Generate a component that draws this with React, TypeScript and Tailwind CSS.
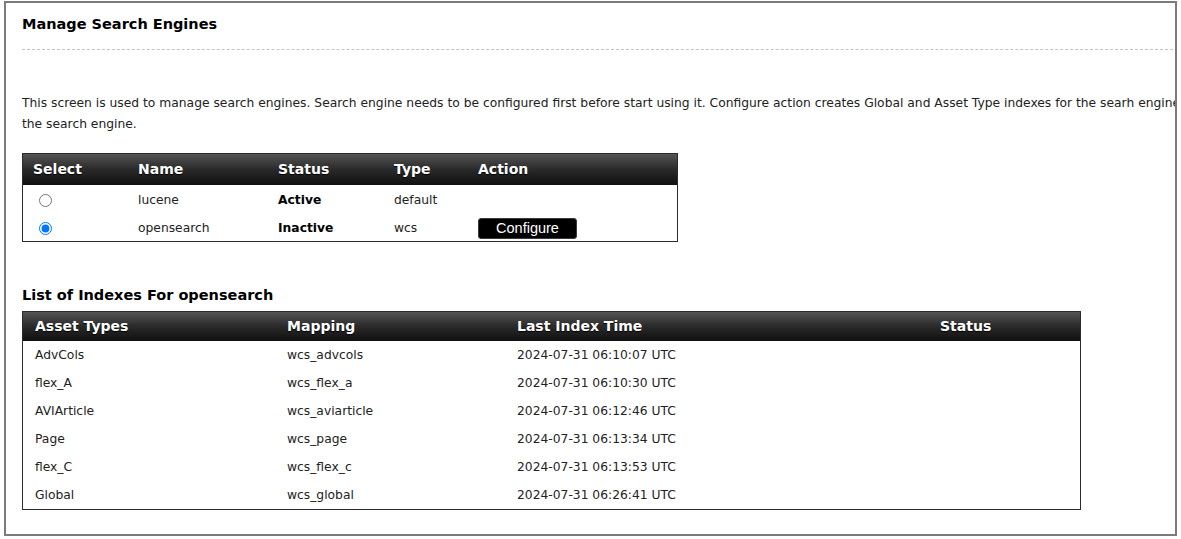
const engines = [
  { name: 'lucene', status: 'Active', type: 'default', selected: false },
  { name: 'opensearch', status: 'Inactive', type: 'wcs', selected: true },
];

const indexes = [
  { asset: 'AdvCols', mapping: 'wcs_advcols', time: '2024-07-31 06:10:07 UTC' },
  { asset: 'flex_A', mapping: 'wcs_flex_a', time: '2024-07-31 06:10:30 UTC' },
  { asset: 'AVIArticle', mapping: 'wcs_aviarticle', time: '2024-07-31 06:12:46 UTC' },
  { asset: 'Page', mapping: 'wcs_page', time: '2024-07-31 06:13:34 UTC' },
  { asset: 'flex_C', mapping: 'wcs_flex_c', time: '2024-07-31 06:13:53 UTC' },
  { asset: 'Global', mapping: 'wcs_global', time: '2024-07-31 06:26:41 UTC' },
];

const headRow = 'bg-linear-to-b from-[#555555] via-[#2a2a2a] to-[#101010] text-white';
const th = 'text-left font-bold text-[14px] p-0 [text-shadow:0_1px_1px_#000]';

const App = () => {
  return (
    <div className="w-[1181px] h-[539px] bg-white font-['DejaVu_Sans',sans-serif] text-[#222]">
      <div className="ml-[4px] mt-[1px] w-[1173px] h-[535px] border-2 border-[#7b7b7b] overflow-hidden pl-[16px] pr-[2px] pt-[11px]">
        {/* Page heading */}
        <h1 className="text-[14.5px] leading-[20px] font-bold text-black">Manage Search Engines</h1>
        <div className="mt-[15px] border-t border-dashed border-[#c4c4c4]"></div>

        {/* Description runs past the frame and is clipped, as in the page */}
        <p className="mt-[43px] text-[12.3px] leading-[21px] whitespace-nowrap">
          This screen is used to manage search engines. Search engine needs to be configured first before start using it. Configure action creates Global and Asset Type indexes for the searh engine
          <br />
          the search engine.
        </p>

        {/* Engines table */}
        <table className="mt-[18px] w-[656px] border border-[#2b2b2b] border-separate border-spacing-0 table-fixed">
          <colgroup>
            <col className="w-[105px]" />
            <col className="w-[140px]" />
            <col className="w-[116px]" />
            <col className="w-[84px]" />
            <col />
          </colgroup>
          <thead>
            <tr className={headRow}>
              <th className={`${th} h-[31px] pl-[10px]`}>Select</th>
              <th className={`${th} h-[31px] pl-[10px]`}>Name</th>
              <th className={`${th} h-[31px] pl-[10px]`}>Status</th>
              <th className={`${th} h-[31px] pl-[10px]`}>Type</th>
              <th className={`${th} h-[31px] pl-[10px]`}>Action</th>
            </tr>
          </thead>
          <tbody className="text-[12.3px]">
            {engines.map((e) => (
              <tr key={e.name}>
                <td className="h-[28px] p-0 pl-[16px] pt-[2px]">
                  <input
                    type="radio"
                    name="engine"
                    defaultChecked={e.selected}
                    className="m-0 w-[13px] h-[13px] align-middle accent-[#0075ff]"
                  />
                </td>
                <td className="h-[28px] p-0 pl-[10px] pt-[2px]">{e.name}</td>
                <td className="h-[28px] p-0 pl-[10px] pt-[2px] font-bold text-black">{e.status}</td>
                <td className="h-[28px] p-0 pl-[10px] pt-[2px]">{e.type}</td>
                <td className="h-[28px] p-0 pl-[10px] pt-[2px]">
                  {e.selected && (
                    <button className="w-[99px] h-[21px] bg-black text-white rounded-[3px] border border-[#3a3a3a] font-['Liberation_Sans',sans-serif] text-[14.5px] leading-[19px]">
                      Configure
                    </button>
                  )}
                </td>
              </tr>
            ))}
          </tbody>
        </table>

        <h2 className="mt-[43px] text-[14.5px] leading-[20px] font-bold text-black">List of Indexes For opensearch</h2>

        {/* Indexes table */}
        <table className="mt-[6px] w-[1059px] border border-[#2b2b2b] border-separate border-spacing-0 table-fixed">
          <colgroup>
            <col className="w-[252px]" />
            <col className="w-[230px]" />
            <col className="w-[423px]" />
            <col />
          </colgroup>
          <thead>
            <tr className={headRow}>
              <th className={`${th} h-[29px] pl-[12px]`}>Asset Types</th>
              <th className={`${th} h-[29px] pl-[12px]`}>Mapping</th>
              <th className={`${th} h-[29px] pl-[12px]`}>Last Index Time</th>
              <th className={`${th} h-[29px] pl-[12px]`}>Status</th>
            </tr>
          </thead>
          <tbody className="text-[12.3px]">
            {indexes.map((row) => (
              <tr key={row.asset}>
                <td className="h-[28px] p-0 pl-[12px] pt-[1px]">{row.asset}</td>
                <td className="h-[28px] p-0 pl-[12px] pt-[1px]">{row.mapping}</td>
                <td className="h-[28px] p-0 pl-[12px] pt-[1px]">{row.time}</td>
                <td className="h-[28px] p-0 pl-[12px] pt-[1px]"></td>
              </tr>
            ))}
          </tbody>
        </table>
      </div>
    </div>
  );
};

export default App;
